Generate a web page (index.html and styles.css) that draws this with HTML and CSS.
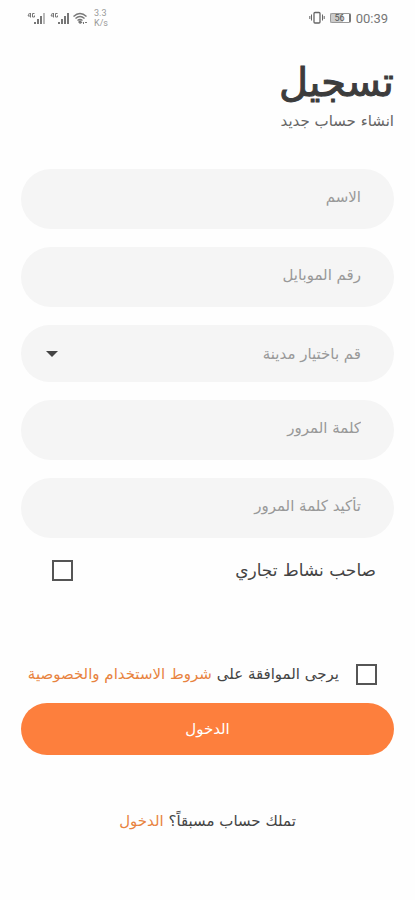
FILE: index.html
```html
<!DOCTYPE html>
<html lang="ar" dir="rtl">
<head>
<meta charset="utf-8">
<meta name="viewport" content="width=device-width, initial-scale=1">
<title>تسجيل</title>
<link rel="stylesheet" href="styles.css">
</head>
<body>
<div class="status" dir="ltr">
  <div class="status-group">
    <svg class="signals" width="62" height="16" viewBox="0 0 62 16" aria-hidden="true">
      <g fill="none" stroke="#777" stroke-width="1">
        <path d="M2.500 3L1 6h3M3.500 3v4.500M7.500 3.500H5.500v3.500h2V5.500M25.500 3L24 6h3M26.500 3v4.500M30.500 3.500h-2v3.500h2V5.500"/>
      </g>
      <g fill="#777">
        <path d="M7 12h2v2H7zM10 9h2v5h-2zM13 6h2v8h-2zM31 12h2v2h-2zM34 9h2v5h-2zM37 6h2v8h-2zM40 3h2v11h-2z"/>
        <path d="M16 3h2v11h-2z" fill="#bbb"/>
        <path d="M53 10l2.500 2.500L53 14l-2-2z"/>
        <path d="M56 12h1v2h-1zM58 12h2v1h-2z"/>
      </g>
      <g fill="none" stroke="#777" stroke-width="1.400">
        <path d="M46.500 6.500q6.500-6 13 0M48.500 8.500q4.500-4 9 0M50.500 10.500q2.500-2 5 0"/>
      </g>
    </svg>
    <div class="rate"><span>3.3</span><span>K/s</span></div>
  </div>
  <div class="status-group">
    <svg width="16" height="14" viewBox="0 0 16 14" fill="none" stroke="#666" aria-hidden="true">
      <rect x="5" y="1.500" width="6" height="10.500" rx="1" stroke-width="1.300"/>
      <path d="M2.500 3.500v6M13.500 3.500v6M.8 5v3M15.200 5v3"/>
    </svg>
    <span class="battery">56</span>
    <span class="clock">00:39</span>
  </div>
</div>
<main class="page">
  <h1>تسجيل</h1>
  <p class="subtitle">انشاء حساب جديد</p>
  <form class="form">
    <input class="field" type="text" placeholder="الاسم" aria-label="الاسم">
    <input class="field" type="tel" placeholder="رقم الموبايل" aria-label="رقم الموبايل">
    <div class="select-wrap">
      <select class="field field-select" aria-label="قم باختيار مدينة"><option>قم باختيار مدينة</option></select>
      <svg class="caret" width="12" height="6" viewBox="0 0 12 6" aria-hidden="true"><path d="M0 0h12L6 6z" fill="#444"/></svg>
    </div>
    <input class="field" type="password" placeholder="كلمة المرور" aria-label="كلمة المرور">
    <input class="field" type="password" placeholder="تأكيد كلمة المرور" aria-label="تأكيد كلمة المرور">
    <div class="business">
      <label for="business">صاحب نشاط تجاري</label>
      <input class="check" id="business" type="checkbox">
    </div>
    <div class="terms">
      <input class="check" id="terms" type="checkbox">
      <label for="terms">يرجى الموافقة على <a href="#terms">شروط الاستخدام والخصوصية</a></label>
    </div>
    <button class="submit" type="submit">الدخول</button>
  </form>
  <p class="login">تملك حساب مسبقاً؟ <a href="#login">الدخول</a></p>
</main>
</body>
</html>
```
FILE: styles.css
```css
* { box-sizing: border-box; }
body {
  margin: 0;
  background: #fefefe;
  color: #444;
  font-family: "DejaVu Sans", sans-serif;
  font-size: 15px;
}
a { color: #e8833f; text-decoration: none; }
.status {
  display: flex;
  justify-content: space-between;
  align-items: center;
  height: 36px;
  padding: 0 27px;
  color: #777;
  font-family: Roboto, sans-serif;
}
.status-group { display: flex; align-items: center; gap: 5px; }
.rate {
  display: flex;
  flex-direction: column;
  color: #999;
  font-size: 9px;
  line-height: 10px;
}
.battery {
  width: 21px;
  height: 10px;
  border: 1px solid #999;
  border-right: 2px solid #777;
  border-radius: 2px;
  background: linear-gradient(to right, #ccc 65%, #fefefe 65%);
  color: #555;
  font-size: 9px;
  line-height: 8px;
  text-align: center;
}
.clock { font-size: 13px; }
.page { padding: 20px 21px; }
h1 {
  margin: 0;
  color: #3c3c3c;
  font-size: 40px;
  font-weight: 400;
  line-height: 52px;
  -webkit-text-stroke: 1px #3c3c3c;
}
.subtitle { margin: 0; color: #666; line-height: 26px; }
.form {
  display: flex;
  flex-direction: column;
  gap: 18px;
  margin-top: 35px;
}
.field {
  width: 100%;
  height: 60px;
  padding: 0 33px 4px;
  border: 0;
  border-radius: 30px;
  background: #f5f5f5;
  color: #999;
  font: inherit;
  text-align: right;
}
.field::placeholder { color: #999; opacity: 1; }
.select-wrap { display: grid; position: relative; }
.field-select { height: 57px; padding-bottom: 0; appearance: none; }
.caret { position: absolute; left: 25px; top: 26px; pointer-events: none; }
.check {
  appearance: none;
  flex: none;
  width: 21px;
  height: 21px;
  margin: 0;
  border: 2px solid #555;
  background: #fff;
}
.business {
  display: flex;
  justify-content: space-between;
  align-items: center;
  height: 28px;
  padding: 0 18px 0 31px;
  font-size: 17px;
}
.terms {
  display: flex;
  align-items: center;
  gap: 17px;
  height: 22px;
  margin-top: 61px;
  padding-right: 17px;
  white-space: nowrap;
}
.submit {
  height: 52px;
  padding: 0;
  border: 0;
  border-radius: 26px;
  background: #fd7f3d;
  color: #fff;
  font: inherit;
}
.login { margin: 53px 0 0; line-height: 26px; text-align: center; }
```
